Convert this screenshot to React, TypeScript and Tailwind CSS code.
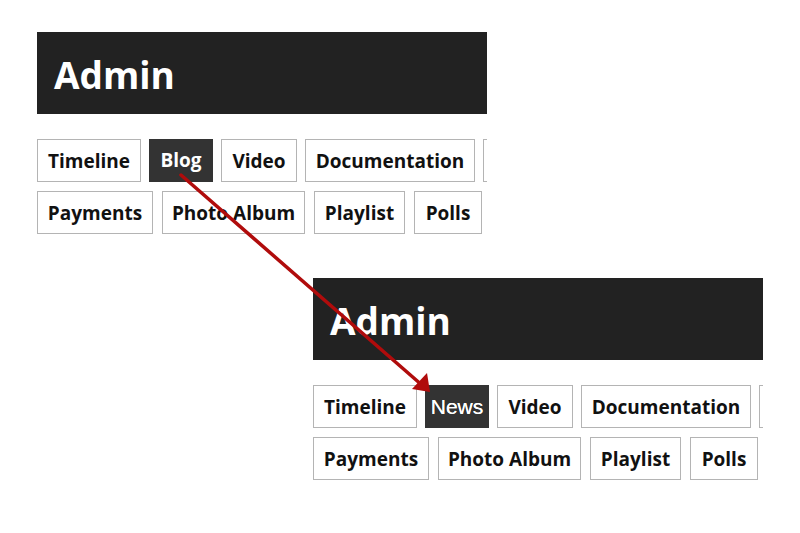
import React from "react";

type Tab = { label: string; w: string; active?: boolean; news?: boolean };

const row1 = (second: boolean): Tab[] => [
  { label: "Timeline", w: "w-[104px]" },
  second
    ? { label: "News", w: "w-[64px]", active: true, news: true }
    : { label: "Blog", w: "w-[64px]", active: true },
  { label: "Video", w: "w-[76px]" },
  { label: "Documentation", w: "w-[170px]" },
  { label: "", w: "w-[60px]" },
];

const row2: Tab[] = [
  { label: "Payments", w: "w-[116px]" },
  { label: "Photo Album", w: "w-[143px]" },
  { label: "Playlist", w: "w-[91px]" },
  { label: "Polls", w: "w-[68px]" },
];

function TabBtn({ t }: { t: Tab }) {
  const base =
    "shrink-0 h-[43px] flex items-center justify-center whitespace-nowrap " + t.w;
  if (t.active) {
    return (
      <div
        className={
          base +
          " bg-[#333333] text-white " +
          (t.news
            ? "font-['Liberation_Sans',Arial,sans-serif] text-[21px] font-normal [text-shadow:0_0_0.6px_#fff]"
            : "font-['Open_Sans',sans-serif] text-[19px] font-bold")
        }
      >
        {t.label}
      </div>
    );
  }
  return (
    <div
      className={
        base +
        " border border-[#b4b4b4] bg-white text-[#111] font-['Open_Sans',sans-serif] text-[19px] font-bold pt-[1px]"
      }
    >
      {t.label}
    </div>
  );
}

function Panel({ second, className }: { second: boolean; className: string }) {
  return (
    <div className={"w-[450px] overflow-hidden " + className}>
      <div className="h-[82px] bg-[#222222] flex items-center pl-[17px]">
        <span className="font-['Open_Sans',sans-serif] font-bold text-[37px] text-white leading-none pt-[2px]">
          Admin
        </span>
      </div>
      <div className="mt-[25px] flex flex-col gap-[9px]">
        <div className="flex gap-[8px]">
          {row1(second).map((t, i) => (
            <TabBtn key={i} t={t} />
          ))}
        </div>
        <div className="flex gap-[9px]">
          {row2.map((t, i) => (
            <TabBtn key={i} t={t} />
          ))}
        </div>
      </div>
    </div>
  );
}

export default function App() {
  return (
    <div className="relative w-[800px] h-[533px] bg-white overflow-hidden">
      <div className="flex flex-col">
        <Panel second={false} className="ml-[37px] mt-[32px]" />
        <Panel second={true} className="ml-[313px] mt-[44px]" />
      </div>
      <svg
        className="absolute inset-0 pointer-events-none"
        width="800"
        height="533"
        viewBox="0 0 800 533"
      >
        <line
          x1="181"
          y1="175"
          x2="423"
          y2="386"
          stroke="#b00c0c"
          strokeWidth="3.5"
          strokeLinecap="round"
        />
        <polygon points="430,392 412,389 427,373" fill="#b00c0c" />
      </svg>
    </div>
  );
}
